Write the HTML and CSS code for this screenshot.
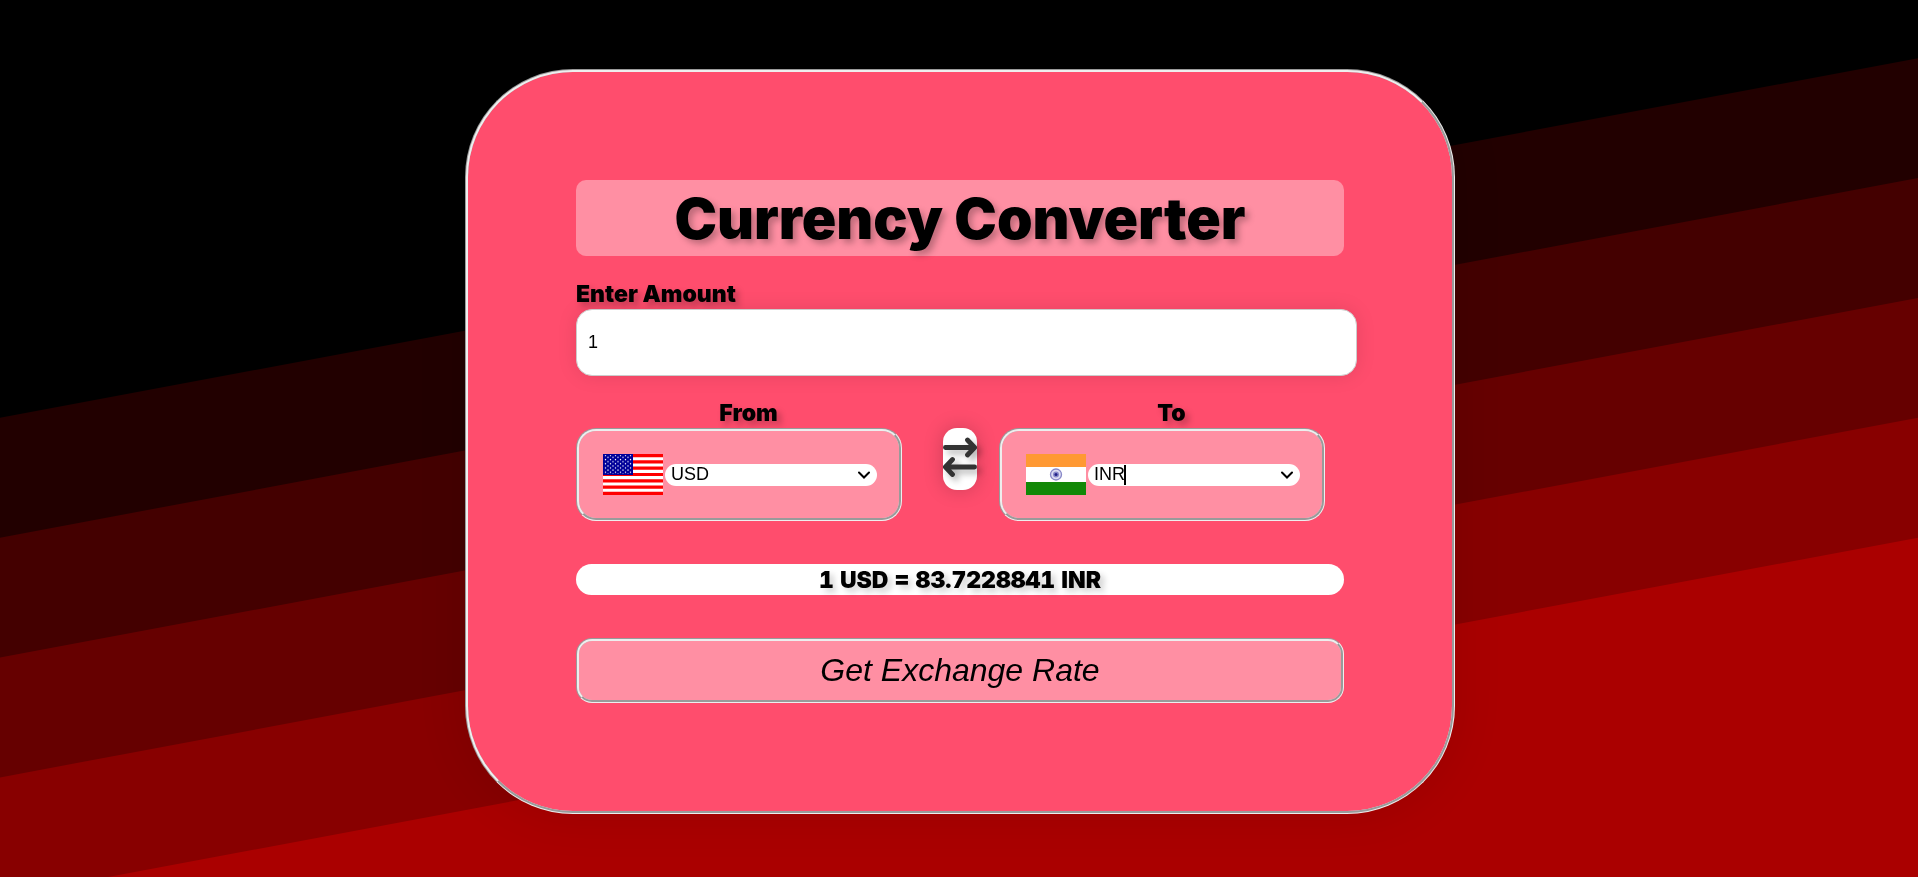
FILE: index.html
```html
<!DOCTYPE html>
<html lang="en">
<head>
<meta charset="utf-8">
<meta name="viewport" content="width=device-width, initial-scale=1">
<title>Currency Converter</title>
<link rel="stylesheet" href="styles.css">
</head>
<body>
<svg class="backdrop" viewBox="0 0 1600 800" preserveAspectRatio="xMidYMin slice" aria-hidden="true">
  <rect width="1600" height="800" fill="#000"/>
  <path fill="#200" d="M0 348.500L1600 48.500V800H0z"/>
  <path fill="#400" d="M0 448.500L1600 148.500V800H0z"/>
  <path fill="#600" d="M0 548.500L1600 248.500V800H0z"/>
  <path fill="#800" d="M0 648.500L1600 348.500V800H0z"/>
  <path fill="#a00" d="M0 748.500L1600 448.500V800H0z"/>
</svg>
<main class="card">
  <h1 class="title">Currency Converter</h1>
  <form class="form">
    <div class="amount">
      <label class="label" for="amount">Enter Amount</label>
      <input class="amount-input" id="amount" type="text" inputmode="decimal" value="1">
    </div>
    <div class="pair">
      <div class="currency">
        <label class="label" for="from">From</label>
        <div class="picker">
          <svg class="flag" viewBox="0 0 60 39" preserveAspectRatio="none" role="img" aria-label="United States">
            <defs>
              <pattern id="stars" width="5" height="4" patternUnits="userSpaceOnUse">
                <circle cx="2.500" cy="1.200" r=".7" fill="#fff"/>
                <circle cx="0" cy="3.200" r=".7" fill="#fff"/>
                <circle cx="5" cy="3.200" r=".7" fill="#fff"/>
              </pattern>
            </defs>
            <rect width="60" height="39" fill="#fff"/>
            <path stroke="#f00" stroke-width="3" d="M0 1.500h60M0 7.500h60M0 13.500h60M0 19.500h60M0 25.500h60M0 31.500h60M0 37.500h60"/>
            <rect width="30" height="20" fill="#009"/>
            <rect x="1" y="1" width="28" height="18" fill="url(#stars)"/>
          </svg>
          <div class="select-wrap">
            <select class="select" id="from"><option>USD</option></select>
            <svg class="chevron" viewBox="0 0 12 8" aria-hidden="true"><path d="M1 1.500l5 5 5-5"/></svg>
          </div>
        </div>
      </div>
      <button class="swap" type="button" aria-label="Swap currencies">
        <svg class="swap-icon" viewBox="0 0 34 40" fill="none" stroke="#333" stroke-width="4.800" stroke-linecap="round" stroke-linejoin="round">
          <path d="M2.400 10.500h29M24.500 3l7.100 7.500-7.100 7.500M31.600 30h-29M9.500 22.500L2.400 30l7.100 7.500"/>
        </svg>
      </button>
      <div class="currency">
        <label class="label" for="to">To</label>
        <div class="picker">
          <svg class="flag" viewBox="0 0 60 41" preserveAspectRatio="none" role="img" aria-label="India">
            <rect width="60" height="41" fill="#fff"/>
            <rect width="60" height="13" fill="#f93"/>
            <rect y="28" width="60" height="13" fill="#128807"/>
            <circle cx="30" cy="20.500" r="5.500" fill="#dcdcf2" stroke="#8888c8" stroke-width="1.300"/>
            <circle cx="30" cy="20.500" r="3" fill="#8888c8"/>
            <circle cx="30" cy="20.500" r="1.500" fill="#228"/>
          </svg>
          <div class="select-wrap">
            <select class="select" id="to"><option>INR</option></select>
            <span class="caret"></span>
            <svg class="chevron" viewBox="0 0 12 8" aria-hidden="true"><path d="M1 1.500l5 5 5-5"/></svg>
          </div>
        </div>
      </div>
    </div>
    <output class="result" for="amount from to">1 USD = 83.7228841 INR</output>
    <button class="submit" type="button">Get Exchange Rate</button>
  </form>
</main>
</body>
</html>
```
FILE: styles.css
```css
* { box-sizing: border-box; }

body {
  margin: 0;
  min-height: 100vh;
  display: flex;
  align-items: center;
  justify-content: center;
  padding: 6px 0 0 2px;
  background: #000;
  color: #000;
  font: 900 23px/30px Inter, "Liberation Sans", sans-serif;
}

.backdrop {
  position: fixed;
  inset: 0;
  z-index: -1;
  width: 100%;
  height: 100%;
}

.card {
  box-sizing: content-box;
  width: 40%;
  min-width: 768px;
  padding: 108px;
  border: 3px groove #eee;
  border-radius: 108px;
  background: #ff4d6d;
  box-shadow: 0 0 50px rgba(0, 0, 0, 0.1);
}

.title {
  margin: 0 0 22px;
  padding-top: 2px;
  border-radius: 10px;
  background: #ff8fa3;
  font-size: 57px;
  font-weight: 900;
  line-height: 74px;
  text-align: center;
  text-shadow: 4px 4px 6px rgba(0, 0, 0, 0.25);
}

.form {
  display: flex;
  flex-direction: column;
}

.label {
  padding-top: 1px;
  text-shadow: 4px 4px 6px rgba(0, 0, 0, 0.25);
}

.amount {
  display: flex;
  flex-direction: column;
  margin: 0 -13px 21px 0;
}

.amount-input {
  height: 67px;
  padding: 0 11px;
  border: 1px solid #ccc;
  border-radius: 16px;
  background: #fff;
  color: #000;
  font: 18px "Liberation Sans", sans-serif;
  box-shadow: 0 0 20px rgba(0, 0, 0, 0.1);
}

.pair {
  display: grid;
  grid-template-columns: 1fr 34px 1fr;
  column-gap: 22px;
  margin-bottom: 43px;
}

.currency {
  display: flex;
  flex-direction: column;
  text-align: center;
}

.picker {
  display: flex;
  align-items: center;
  gap: 2px;
  margin-right: 19px;
  padding: 23px 22px 23px 24px;
  border: 3px groove #eee;
  border-radius: 20px;
  background: #ff8fa3;
}

.flag {
  flex: none;
  width: 60px;
  height: 41px;
}

.select-wrap {
  position: relative;
  display: flex;
  flex: 1;
}

.select {
  appearance: none;
  width: 100%;
  height: 22px;
  padding: 0 24px 2px 6px;
  border: 0;
  border-radius: 11px;
  background-color: #fff;
  color: #000;
  font: 18px/20px "Liberation Sans", sans-serif;
}

.chevron {
  position: absolute;
  top: 7px;
  right: 7px;
  width: 12px;
  height: 8px;
  fill: none;
  stroke: #000;
  stroke-width: 2;
  stroke-linecap: round;
  pointer-events: none;
}

.caret {
  position: absolute;
  top: 1px;
  left: 36px;
  width: 2px;
  height: 20px;
  background: #000;
}

.swap {
  display: flex;
  align-items: center;
  justify-content: center;
  align-self: start;
  height: 62px;
  margin-top: 31px;
  padding: 0 0 4px;
  border: 0;
  border-radius: 14px;
  background: #fff;
  box-shadow: 0 0 20px rgba(0, 0, 0, 0.2);
}

.swap-icon {
  flex: none;
  width: 34px;
  height: 40px;
  overflow: visible;
  filter: drop-shadow(4px 4px 3px rgba(0, 0, 0, 0.3));
}

.result {
  display: block;
  margin-bottom: 43px;
  padding-top: 1px;
  border-radius: 16px;
  background: #fff;
  font-variant-numeric: tabular-nums;
  text-align: center;
  text-shadow: 4px 4px 6px rgba(0, 0, 0, 0.2);
}

.submit {
  height: 65px;
  padding: 0;
  border: 3px groove #eee;
  border-radius: 16px;
  background: #ff8fa3;
  color: #000;
  font: italic 32px "Liberation Sans", sans-serif;
}
```
